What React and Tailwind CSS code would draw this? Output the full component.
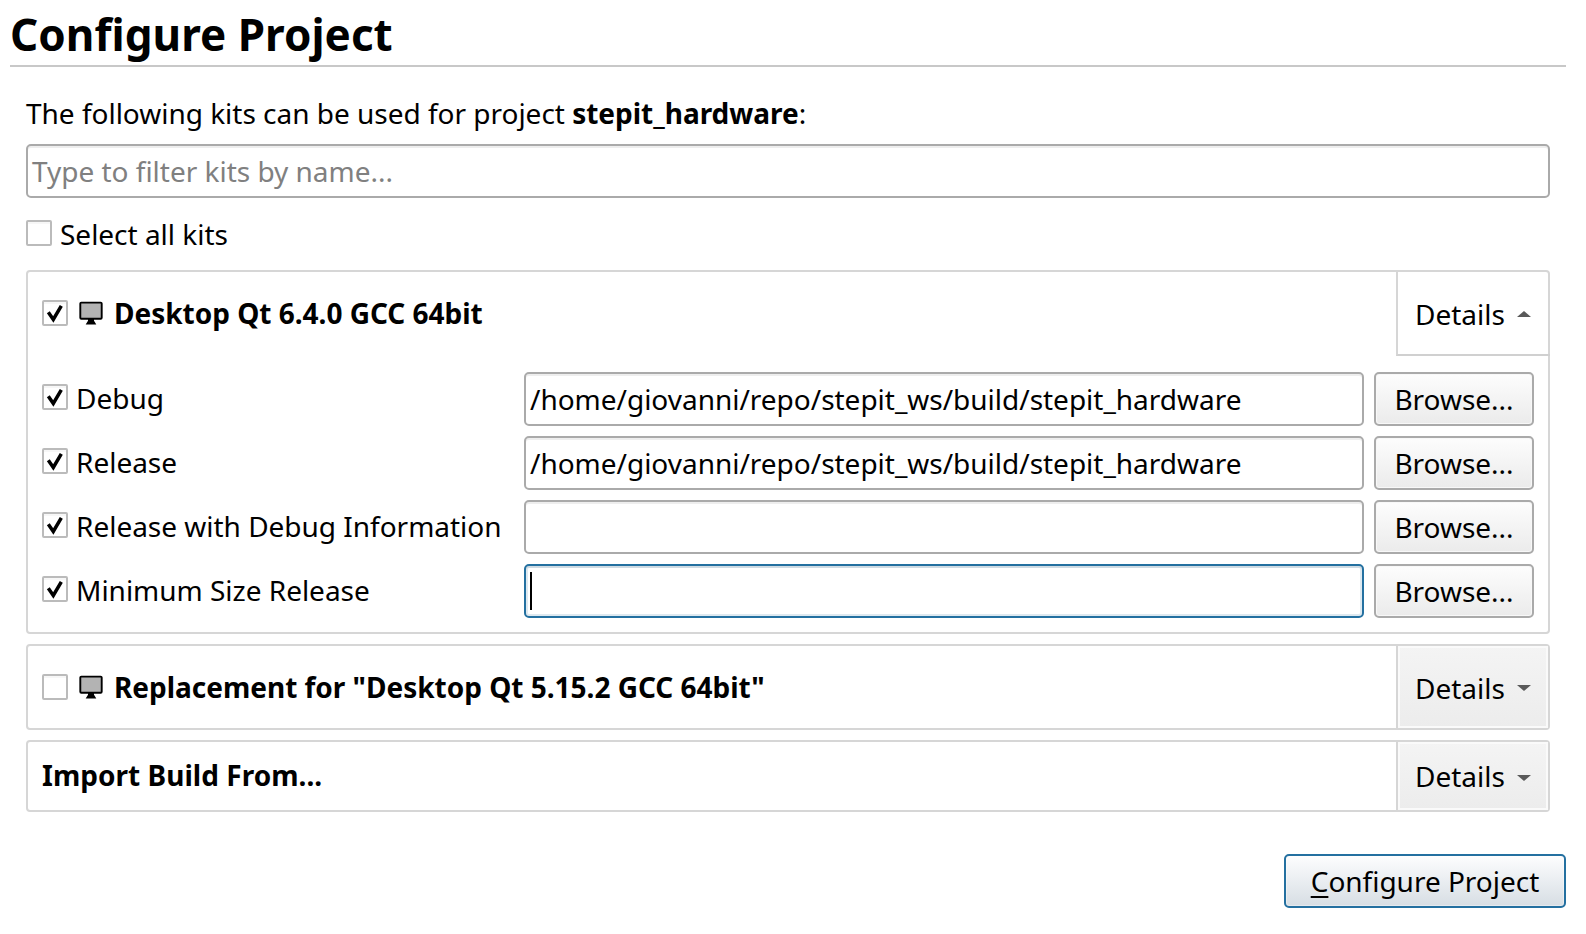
import React from "react";

function Checkbox({ checked = false }) {
  return (
    <span className="block size-[26px] shrink-0 rounded-[2px] border-2 border-[#bbbbbb] bg-white shadow-[inset_0_2px_0_#f7f7f7]">
      {checked && (
        <svg viewBox="0 0 22 22" className="block size-[22px]">
          <path d="M4.3 10.2 L9.3 17.4 L17.3 3.8" fill="none" stroke="#000" strokeWidth="3.5" />
        </svg>
      )}
    </span>
  );
}

function Monitor() {
  return (
    <svg viewBox="0 0 24 24" className="block size-6 shrink-0">
      <rect x="1.3" y="1.6" width="21.4" height="16.2" rx="1" fill="#b3b3b3" stroke="#000" strokeWidth="1.9" />
      <path d="M9 17.8 H15 V19.8 L17.3 23.4 H6.7 L9 19.8 Z" fill="#000" />
    </svg>
  );
}

function Arrow({ up = false }) {
  return (
    <svg viewBox="0 0 14 6" className="block h-[6px] w-[14px]">
      <path d={up ? "M0 6 L7 0 L14 6 Z" : "M0 0 L14 0 L7 6 Z"} fill="#595959" />
    </svg>
  );
}

function Details({ open = false, short = false }) {
  return (
    <div
      className={
        open
          ? "-mr-[2px] flex w-[154px] shrink-0 items-center border-b-2 border-l-2 border-[#d0d0d0] border-l-[#d6d6d6] pl-[17px]"
          : "flex w-[152px] shrink-0 items-center border-l-2 border-[#d6d6d6] bg-linear-to-b from-[#f4f4f4] to-[#ececec] pl-[17px] shadow-[inset_0_0_0_2px_#fafafa]"
      }
    >
      <span className={short ? "" : "pt-[2px]"}>Details</span>
      <span className={short ? "ml-[12px] pt-[4px]" : "ml-[12px] pt-[2px]"}>
        <Arrow up={open} />
      </span>
    </div>
  );
}

function Browse() {
  return (
    <button className="ml-[10px] h-[54px] w-[160px] rounded-[5px] border-2 border-[#aaaaaa] bg-linear-to-b from-[#fdfdfd] to-[#ebebeb] shadow-[inset_0_0_0_1px_#f8f8f8]">
      Browse...
    </button>
  );
}

const builds = [
  { name: "Debug", path: "/home/giovanni/repo/stepit_ws/build/stepit_hardware" },
  { name: "Release", path: "/home/giovanni/repo/stepit_ws/build/stepit_hardware" },
  { name: "Release with Debug Information", path: "" },
  { name: "Minimum Size Release", path: "", focused: true },
];

function BuildRow({ name, path, focused }) {
  return (
    <div className="flex h-[54px] items-center">
      <div className="flex w-[482px] shrink-0 items-center pb-[4px]">
        <Checkbox checked />
        <span className="ml-[8px] pt-[2px]">{name}</span>
      </div>
      <div
        className={
          focused
            ? "flex h-[54px] flex-1 items-center rounded-[5px] border-2 border-[#2470a0] bg-white pl-1 shadow-[inset_0_2px_0_#cfdbe3,inset_0_0_0_2px_#dee9f0]"
            : "flex h-[54px] flex-1 items-center rounded-[5px] border-2 border-[#aaaaaa] bg-white pl-1 shadow-[inset_0_2px_0_#eeeeee]"
        }
      >
        {focused ? <span className="h-[38px] w-[2px] bg-black" /> : path}
      </div>
      <Browse />
    </div>
  );
}

export default function App() {
  return (
    <div className="h-[934px] w-[1586px] overflow-hidden bg-white pr-[20px] pl-[10px] font-['Noto_Sans',sans-serif] text-[28px] leading-[38px] tracking-[-0.015px] whitespace-nowrap text-black">
      <h1 className="h-[67px] border-b-2 border-[#c8c8c8] pt-[4px] text-[44px] leading-[60px] font-bold tracking-[0.03px]">
        Configure Project
      </h1>
      <main className="flex flex-col px-4">
        <p className="mt-[27px]">
          The following kits can be used for project <b>stepit_hardware</b>:
        </p>
        <div className="mt-[12px] flex h-[54px] items-center rounded-[5px] border-2 border-[#aaaaaa] pl-1 text-[#808080] shadow-[inset_0_2px_0_#eeeeee]">
          Type to filter kits by name...
        </div>
        <div className="mt-[16px] flex h-[38px] items-center">
          <Checkbox />
          <span className="ml-[8px] pt-[2px]">Select all kits</span>
        </div>

        <section className="mt-[18px] h-[364px] rounded-[4px] border-2 border-[#d6d6d6]">
          <div className="flex h-[84px]">
            <div className="flex flex-1 items-center pb-[2px] pl-[14px]">
              <Checkbox checked />
              <span className="ml-[11px]">
                <Monitor />
              </span>
              <b className="ml-[11px]">Desktop Qt 6.4.0 GCC 64bit</b>
            </div>
            <Details open />
          </div>
          <div className="flex flex-col gap-[10px] px-[14px] pt-[16px]">
            {builds.map((b) => (
              <BuildRow key={b.name} {...b} />
            ))}
          </div>
        </section>

        <section className="mt-[10px] flex h-[86px] rounded-[4px] border-2 border-[#d6d6d6]">
          <div className="flex flex-1 items-center pl-[14px]">
            <Checkbox />
            <span className="ml-[11px]">
              <Monitor />
            </span>
            <b className="ml-[11px]">Replacement for "Desktop Qt 5.15.2 GCC 64bit"</b>
          </div>
          <Details />
        </section>

        <section className="mt-[10px] flex h-[72px] rounded-[4px] border-2 border-[#d6d6d6]">
          <b className="flex flex-1 items-center pb-[2px] pl-[14px] tracking-[0.03px]">Import Build From...</b>
          <Details short />
        </section>
      </main>
      <div className="mt-[42px] flex justify-end">
        <button className="h-[54px] w-[282px] rounded-[5px] border-2 border-[#2470a0] bg-linear-to-b from-[#fdfdfe] to-[#d7dee4] shadow-[inset_0_0_0_1px_#ffffff60]">
          <span className="underline decoration-2 underline-offset-[4px] [text-decoration-skip-ink:none]">C</span>
          onfigure Project
        </button>
      </div>
    </div>
  );
}
